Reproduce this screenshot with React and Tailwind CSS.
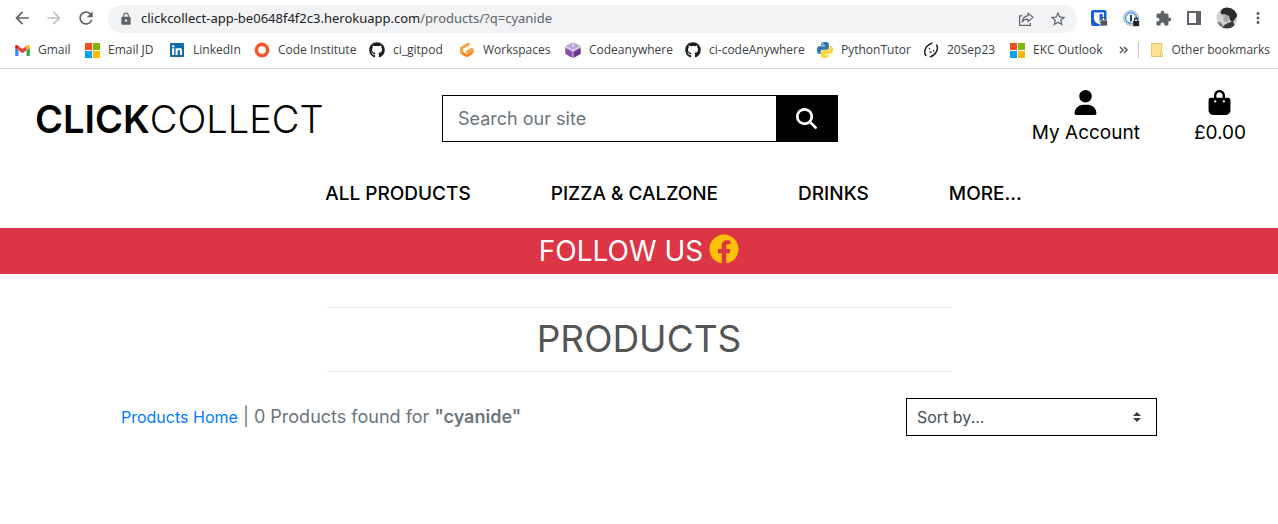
import { useState } from "react";
import { MdArrowBack, MdArrowForward, MdRefresh, MdLock, MdStarBorder, MdMoreVert, MdExtension } from "react-icons/md";
import { FaFacebook, FaGithub } from "react-icons/fa";
import { FaUser, FaBagShopping, FaMagnifyingGlass } from "react-icons/fa6";

function GmailIcon() {
  return (
    <svg viewBox="52 42 88 66" className="h-[11px] w-[15px]">
      <path fill="#4285f4" d="M58 108h14V74L52 59v43c0 3.32 2.69 6 6 6" />
      <path fill="#34a853" d="M120 108h14c3.32 0 6-2.69 6-6V59l-20 15" />
      <path fill="#fbbc04" d="M120 48v26l20-15v-8c0-7.42-8.47-11.65-14.4-7.2" />
      <path fill="#ea4335" d="M72 74V48l24 18 24-18v26L96 92" />
      <path fill="#c5221f" d="M52 51v8l20 15V48l-5.6-4.2c-5.94-4.45-14.4-.22-14.4 7.2" />
    </svg>
  );
}

function MicrosoftIcon() {
  return (
    <svg viewBox="0 0 15 15" className="size-[15px]">
      <path fill="#f25022" d="M0 0h7v7H0z" />
      <path fill="#7fba00" d="M8 0h7v7H8z" />
      <path fill="#00a4ef" d="M0 8h7v7H0z" />
      <path fill="#ffb900" d="M8 8h7v7H8z" />
    </svg>
  );
}

function LinkedInIcon() {
  return (
    <svg viewBox="0 0 14 14" className="size-[14px]">
      <rect width="14" height="14" rx="1" fill="#0a6fa8" />
      <circle cx="3.2" cy="3.2" r="1.2" fill="#fff" />
      <path fill="#fff" d="M2.1 5.3h2.1V12H2.1zM5.6 5.3h2v.9c.4-.7 1.1-1.1 2.1-1.1 1.9 0 2.4 1.2 2.4 3V12H10V8.600c0-.9-.1-1.700-1.100-1.700s-1.200.8-1.200 1.700V12H5.600z" />
    </svg>
  );
}

function RingIcon() {
  return (
    <svg viewBox="0 0 16 16" className="size-4">
      <circle cx="8" cy="8" r="5.600" fill="none" stroke="#f05a33" strokeWidth="3.600" />
    </svg>
  );
}

function GitHubIcon() {
  return <FaGithub className="size-4 text-[#1b1f23]" />;
}

function GitpodIcon() {
  return (
    <svg viewBox="0 0 16 16" className="size-4">
      <path fill="none" stroke="#f9a23b" strokeWidth="3" strokeLinejoin="round" strokeLinecap="round" d="M9.400 2.200 3.300 5.500a1.200 1.200 0 0 0-.7 1.100v3.300c0 .4.200.8.6 1l4.100 2.500c.4.200.8.200 1.200 0l4.100-2.500a1 1 0 0 0 .5-1V7.200L8.500 9.800" />
      <path fill="none" stroke="#f58220" strokeWidth="1.500" strokeLinecap="round" d="m3.400 11.500 4 2.400c.3.200.8.200 1.100 0l4.400-2.600" />
    </svg>
  );
}

function CubeIcon() {
  return (
    <svg viewBox="0 0 16 16" className="size-4">
      <path fill="#bda3cf" d="M8 0l7.500 4L8 8 .5 4z" />
      <path fill="#bda3cf" d="M.3 4.500 7.600 8.500v3L.3 7.500zM15.700 4.500 8.400 8.500v3l7.300-4z" />
      <path fill="#8950a5" d="M.3 6 7.600 10V16L.3 12z" />
      <path fill="#6f3192" d="M15.700 6 8.400 10V16l7.300-4z" />
      <path stroke="#fff" strokeWidth=".9" d="M8 0v5" />
    </svg>
  );
}

function PythonIcon() {
  return (
    <svg viewBox="0 0 24 24" className="size-4">
      <path fill="#3776ab" d="M14.250.180l.9.200.73.260.59.300.45.320.34.340.250.340.160.330.1.300.040.260.020.200-.010.130V8.500l-.050.630-.130.550-.210.460-.260.380-.3.310-.330.250-.350.190-.350.140-.330.100-.3.070-.260.040-.210.020H8.770l-.69.050-.59.140-.5.220-.410.270-.330.320-.270.350-.2.360-.150.370-.1.350-.070.320-.040.270-.020.210v3.060H3.170l-.210-.030-.280-.070-.320-.120-.350-.180-.360-.260-.360-.360-.350-.460-.320-.590-.280-.730-.210-.880-.140-1.050-.050-1.230.060-1.220.160-1.040.240-.870.320-.710.360-.570.4-.440.420-.330.420-.240.4-.160.360-.1.320-.050.240-.010h.160l.060.010h8.160v-.830H6.180l-.010-2.750-.020-.370.050-.340.110-.310.170-.280.250-.260.310-.230.380-.2.440-.180.510-.150.580-.120.640-.1.710-.060.770-.040.840-.020 1.270.050zM8.020 2.050l-.230.330-.080.410.080.410.230.340.330.220.410.090.410-.090.330-.220.230-.340.080-.410-.080-.410-.230-.330-.330-.220-.410-.090-.410.090z" />
      <path fill="#ffd43b" d="M21.100 6.110l.280.060.320.120.350.180.360.270.360.350.350.470.320.590.280.730.210.880.140 1.040.050 1.230-.060 1.230-.160 1.040-.240.860-.320.710-.360.570-.4.450-.420.330-.420.240-.4.160-.360.090-.320.050-.240.020-.160-.010h-8.220v.820h5.840l.010 2.760.020.360-.050.340-.110.310-.170.290-.250.250-.310.240-.380.200-.440.170-.510.150-.580.130-.640.090-.71.070-.77.040-.84.010-1.270-.040-1.070-.140-.9-.200-.730-.250-.590-.300-.450-.330-.340-.340-.250-.340-.160-.330-.1-.300-.040-.250-.020-.200.010-.130v-5.340l.050-.640.130-.540.210-.460.260-.380.3-.320.330-.240.350-.200.350-.140.330-.100.3-.060.260-.040.210-.020.130-.010h5.840l.69-.050.59-.140.5-.210.410-.280.330-.320.270-.350.2-.360.150-.360.1-.350.070-.320.040-.280.020-.210V6.070h2.090l.140.010z" />
      <circle cx="14.900" cy="21.100" r="1" fill="#fff" />
    </svg>
  );
}

function ScribbleIcon() {
  return (
    <svg viewBox="0 0 16 16" className="size-4" fill="none" stroke="#25292d" strokeLinecap="round">
      <path strokeWidth="1.600" d="M8.800 1.200C5.200 2.500 2.300 5.900 1.700 9.200c-.3 1.900.1 3.100 1.200 4.200" />
      <path strokeWidth="1.600" d="M13.700 3.200c1 1.800.9 4.200-.3 6.500-1.300 2.600-3.400 4.400-5.900 5.100" />
      <path strokeWidth="1.500" d="M6.400 6.500v.2M10.600 8.600v.2M7.100 9.900l.8.300" />
    </svg>
  );
}

function ShareIcon() {
  return (
    <svg viewBox="0 0 16 16" className="size-4" fill="none" stroke="#5f6368" strokeWidth="1.200" strokeLinejoin="round">
      <path d="M4.500 4.800H1.600v9.600h10.800V12" />
      <path d="M10 2.200 15 6.400l-5 4.200V8.200c-2.700 0-4.500.8-5.800 2.700.4-3.400 2.500-5.700 5.800-6.300z" />
    </svg>
  );
}

function BitwardenIcon() {
  return (
    <svg viewBox="0 0 17 17" className="size-[17px]">
      <rect x="0" y="0" width="15.500" height="16" rx="2" fill="#175ddc" />
      <path fill="#fff" d="M3 2.500h10v6.300c0 2.300-2 4.200-5 5.500-3-1.300-5-3.200-5-5.500z" />
      <path fill="#175ddc" d="M8.500 4H11.700v4.700c0 1.400-1.200 2.500-3.200 3.600z" />
      <rect x="9" y="10" width="7.500" height="6" rx="1" fill="#555" stroke="#fff" strokeWidth=".7" />
      <path fill="none" stroke="#555" strokeWidth="1.200" d="M11 10V8.800c0-2 3.500-2 3.500 0V10" />
    </svg>
  );
}

function OnePasswordIcon() {
  return (
    <svg viewBox="0 0 17 17" className="size-[17px]">
      <circle cx="8" cy="8" r="7.400" fill="#fff" stroke="#8b99a8" strokeWidth=".8" />
      <circle cx="8" cy="8" r="5.500" fill="none" stroke="#5ea6ef" strokeWidth="1.800" />
      <rect x="7" y="4.700" width="2" height="6.500" rx=".6" fill="#26415e" />
      <rect x="9.700" y="10.500" width="6.800" height="6" rx="1" fill="#222" stroke="#fff" strokeWidth=".7" />
      <path fill="none" stroke="#222" strokeWidth="1.200" d="M11.500 10.500V9.300c0-2 3.200-2 3.200 0v1.200" />
    </svg>
  );
}

function SidePanelIcon() {
  return (
    <svg viewBox="0 0 14 14" className="size-[14px]">
      <path fill="#5f6368" fillRule="evenodd" d="M0 0h14v14H0zM2 2v10h7V2z" />
    </svg>
  );
}

function AvatarIcon() {
  return (
    <svg viewBox="0 0 22 22" className="size-[22px]">
      <defs>
        <clipPath id="avatar-round">
          <circle cx="11" cy="11" r="10.500" />
        </clipPath>
      </defs>
      <g clipPath="url(#avatar-round)">
        <path fill="#d2d2d2" d="M0 0h22v22H0z" />
        <path fill="#777" d="M0 16c3-2 5-1 6 1l2 5H0z" />
        <path fill="#2b2b2b" d="M5 4C8-2 17-3 20 3c2 4 1 7-1 9-1 3-4 3-5 1l-1-4-5-2C6 8 4 7 5 4z" />
        <path fill="#a8a8a8" d="M7 7.500c2-.8 4 .2 5.500 2l.8 3c-1 2.200-3 3-5 2.300L7.500 12z" />
        <path fill="#3a3a3a" d="M6 22c1-3 3-5 6-6l5-2 3 8z" />
      </g>
    </svg>
  );
}

function FolderIcon() {
  return (
    <svg viewBox="0 0 12 14" className="h-[14px] w-3">
      <path fill="#fde293" stroke="#e5bd4f" strokeWidth=".8" d="M.5.500h10.300v8.800l.8.800v3.400H.5z" />
      <path fill="none" stroke="#e5bd4f" strokeWidth=".8" d="M10.800 9.300 9.500 10.500v3" />
    </svg>
  );
}

const bookmarks = [
  { label: "Gmail", Icon: GmailIcon, width: "w-[70px]" },
  { label: "Email JD", Icon: MicrosoftIcon, width: "w-[85px]" },
  { label: "LinkedIn", Icon: LinkedInIcon, width: "w-[85px]" },
  { label: "Code Institute", Icon: RingIcon, width: "w-[115px]" },
  { label: "ci_gitpod", Icon: GitHubIcon, width: "w-[90px]" },
  { label: "Workspaces", Icon: GitpodIcon, width: "w-[106px]" },
  { label: "Codeanywhere", Icon: CubeIcon, width: "w-[120px]" },
  { label: "ci-codeAnywhere", Icon: GitHubIcon, width: "w-[132px]" },
  { label: "PythonTutor", Icon: PythonIcon, width: "w-[106px]" },
  { label: "20Sep23", Icon: ScribbleIcon, width: "w-[86px]" },
  { label: "EKC Outlook", Icon: MicrosoftIcon, width: "w-[110px]" },
];

function BrowserBar() {
  return (
    <div className="border-b border-[#d5d7da] bg-white font-['Open_Sans',sans-serif] text-[#3c4043]">
      <div className="flex h-9 items-center pr-[15px] pl-3 text-[#5f6368]">
        <div className="flex items-center gap-3">
          <button type="button" aria-label="Back"><MdArrowBack className="size-5" /></button>
          <button type="button" aria-label="Forward" className="text-[#bdc1c6]"><MdArrowForward className="size-5" /></button>
          <button type="button" aria-label="Reload"><MdRefresh className="size-5" /></button>
        </div>
        <div className="mt-px ml-3 flex h-7 flex-1 items-center rounded-full bg-[#f1f3f4] pr-2.5 pl-[11px]">
          <MdLock className="size-3.5" />
          <p className="ml-2 flex-1 font-['Noto_Sans',sans-serif] text-[13px] whitespace-nowrap">
            <span className="text-[#202124]">clickcollect-app-be0648f4f2c3.herokuapp.com</span>/products/?q=cyanide
          </p>
          <div className="flex items-center gap-[15px]">
            <button type="button" aria-label="Share"><ShareIcon /></button>
            <button type="button" aria-label="Bookmark this page"><MdStarBorder className="size-[18px]" /></button>
          </div>
        </div>
        <div className="ml-3.5 flex items-center gap-[15px]">
          <button type="button" aria-label="Bitwarden"><BitwardenIcon /></button>
          <button type="button" aria-label="1Password"><OnePasswordIcon /></button>
          <button type="button" aria-label="Extensions"><MdExtension className="size-[17px]" /></button>
          <button type="button" aria-label="Side panel"><SidePanelIcon /></button>
          <button type="button" aria-label="Profile"><AvatarIcon /></button>
          <button type="button" aria-label="Menu" className="-mx-1"><MdMoreVert className="size-[18px]" /></button>
        </div>
      </div>
      <nav aria-label="Bookmarks" className="flex h-8 items-center pr-2 pb-1 pl-3.5 text-xs whitespace-nowrap">
        {bookmarks.map(({ label, Icon, width }) => (
          <a key={label} href="#" className={`flex shrink-0 items-center gap-2 ${width}`}>
            <span className="flex w-4 justify-center"><Icon /></span>
            {label}
          </a>
        ))}
        <div className="ml-auto flex items-center">
          <button type="button" aria-label="More bookmarks" className="pr-2.5">
            <svg viewBox="0 0 9 8" className="h-2 w-[9px]" fill="none" stroke="#5f6368" strokeWidth="1.600">
              <path d="m1 1 3 3-3 3M5 1l3 3-3 3" />
            </svg>
          </button>
          <a href="#" className="flex items-center gap-2 border-l border-[#c4c7cb] pl-3">
            <FolderIcon />
            Other bookmarks
          </a>
        </div>
      </nav>
    </div>
  );
}

function Header() {
  const [query, setQuery] = useState("");
  return (
    <header className="text-black">
      <div className="grid grid-cols-3 items-center pt-[21px]">
        <a href="#" className="pl-[35px] text-[38px] leading-[54px] whitespace-nowrap">
          <strong className="font-semibold">CLICK</strong>
          <span className="font-light">COLLECT</span>
        </a>
        <form className="mr-3.5 ml-4 flex h-[47px] border border-black" onSubmit={(e) => e.preventDefault()}>
          <input
            type="text"
            aria-label="Search our site"
            placeholder="Search our site"
            value={query}
            onChange={(e) => setQuery(e.target.value)}
            className="min-w-0 flex-1 px-[15px] text-[18px] outline-none placeholder:text-[#6c757d]"
          />
          <button type="submit" aria-label="Search" className="flex w-[61px] items-center justify-center bg-black text-white">
            <FaMagnifyingGlass className="size-[21px]" />
          </button>
        </form>
        <div className="flex justify-end gap-[54px] pr-8 text-[19px] leading-7">
          <a href="#" className="flex flex-col items-center gap-1">
            <FaUser className="size-[25px]" />
            My Account
          </a>
          <a href="#" className="flex flex-col items-center gap-1">
            <FaBagShopping className="size-[25px]" />
            £0.00
          </a>
        </div>
      </div>
      <nav aria-label="Main" className="flex justify-center gap-20 pt-[33px] pb-5 pl-[69px] text-[19px] leading-7 font-medium whitespace-nowrap">
        <a href="#">ALL PRODUCTS</a>
        <a href="#">PIZZA &amp; CALZONE</a>
        <a href="#">DRINKS</a>
        <a href="#">MORE...</a>
      </nav>
    </header>
  );
}

export default function App() {
  return (
    <div className="bg-white font-['Inter',sans-serif]">
      <BrowserBar />
      <Header />
      <div className="flex h-[46px] items-center justify-center gap-1.5 bg-[#dc3545] text-[28px] text-white">
        FOLLOW US
        <a href="#" aria-label="Facebook" className="-mt-1 text-[#ffc107]"><FaFacebook className="size-[30px]" /></a>
      </div>
      <main className="mx-auto max-w-[1036px] pt-[33px]">
        <h1 className="mx-auto max-w-[625px] border-y border-[#e5e5e5] pt-0.5 pb-1 text-center text-[37px] leading-[57px] font-normal text-[#555]">
          PRODUCTS
        </h1>
        <div className="mt-[26px] flex items-center justify-between">
          <p className="text-[18px] leading-7 text-[#6c757d]">
            <a href="#" className="text-[16px] text-[#007bff]">Products Home</a> | 0 Products found for{" "}
            <strong className="font-semibold">"cyanide"</strong>
          </p>
          <div className="relative w-[251px]">
            <select aria-label="Sort products" className="h-[38px] w-full appearance-none border border-black bg-white px-2.5 text-[16px] text-[#495057]">
              <option>Sort by...</option>
            </select>
            <svg viewBox="0 0 8 10" className="pointer-events-none absolute top-3.5 right-4 h-2.5 w-2" fill="#343a40">
              <path d="M4 0 0 4h8zM4 10 0 6h8z" />
            </svg>
          </div>
        </div>
      </main>
    </div>
  );
}
